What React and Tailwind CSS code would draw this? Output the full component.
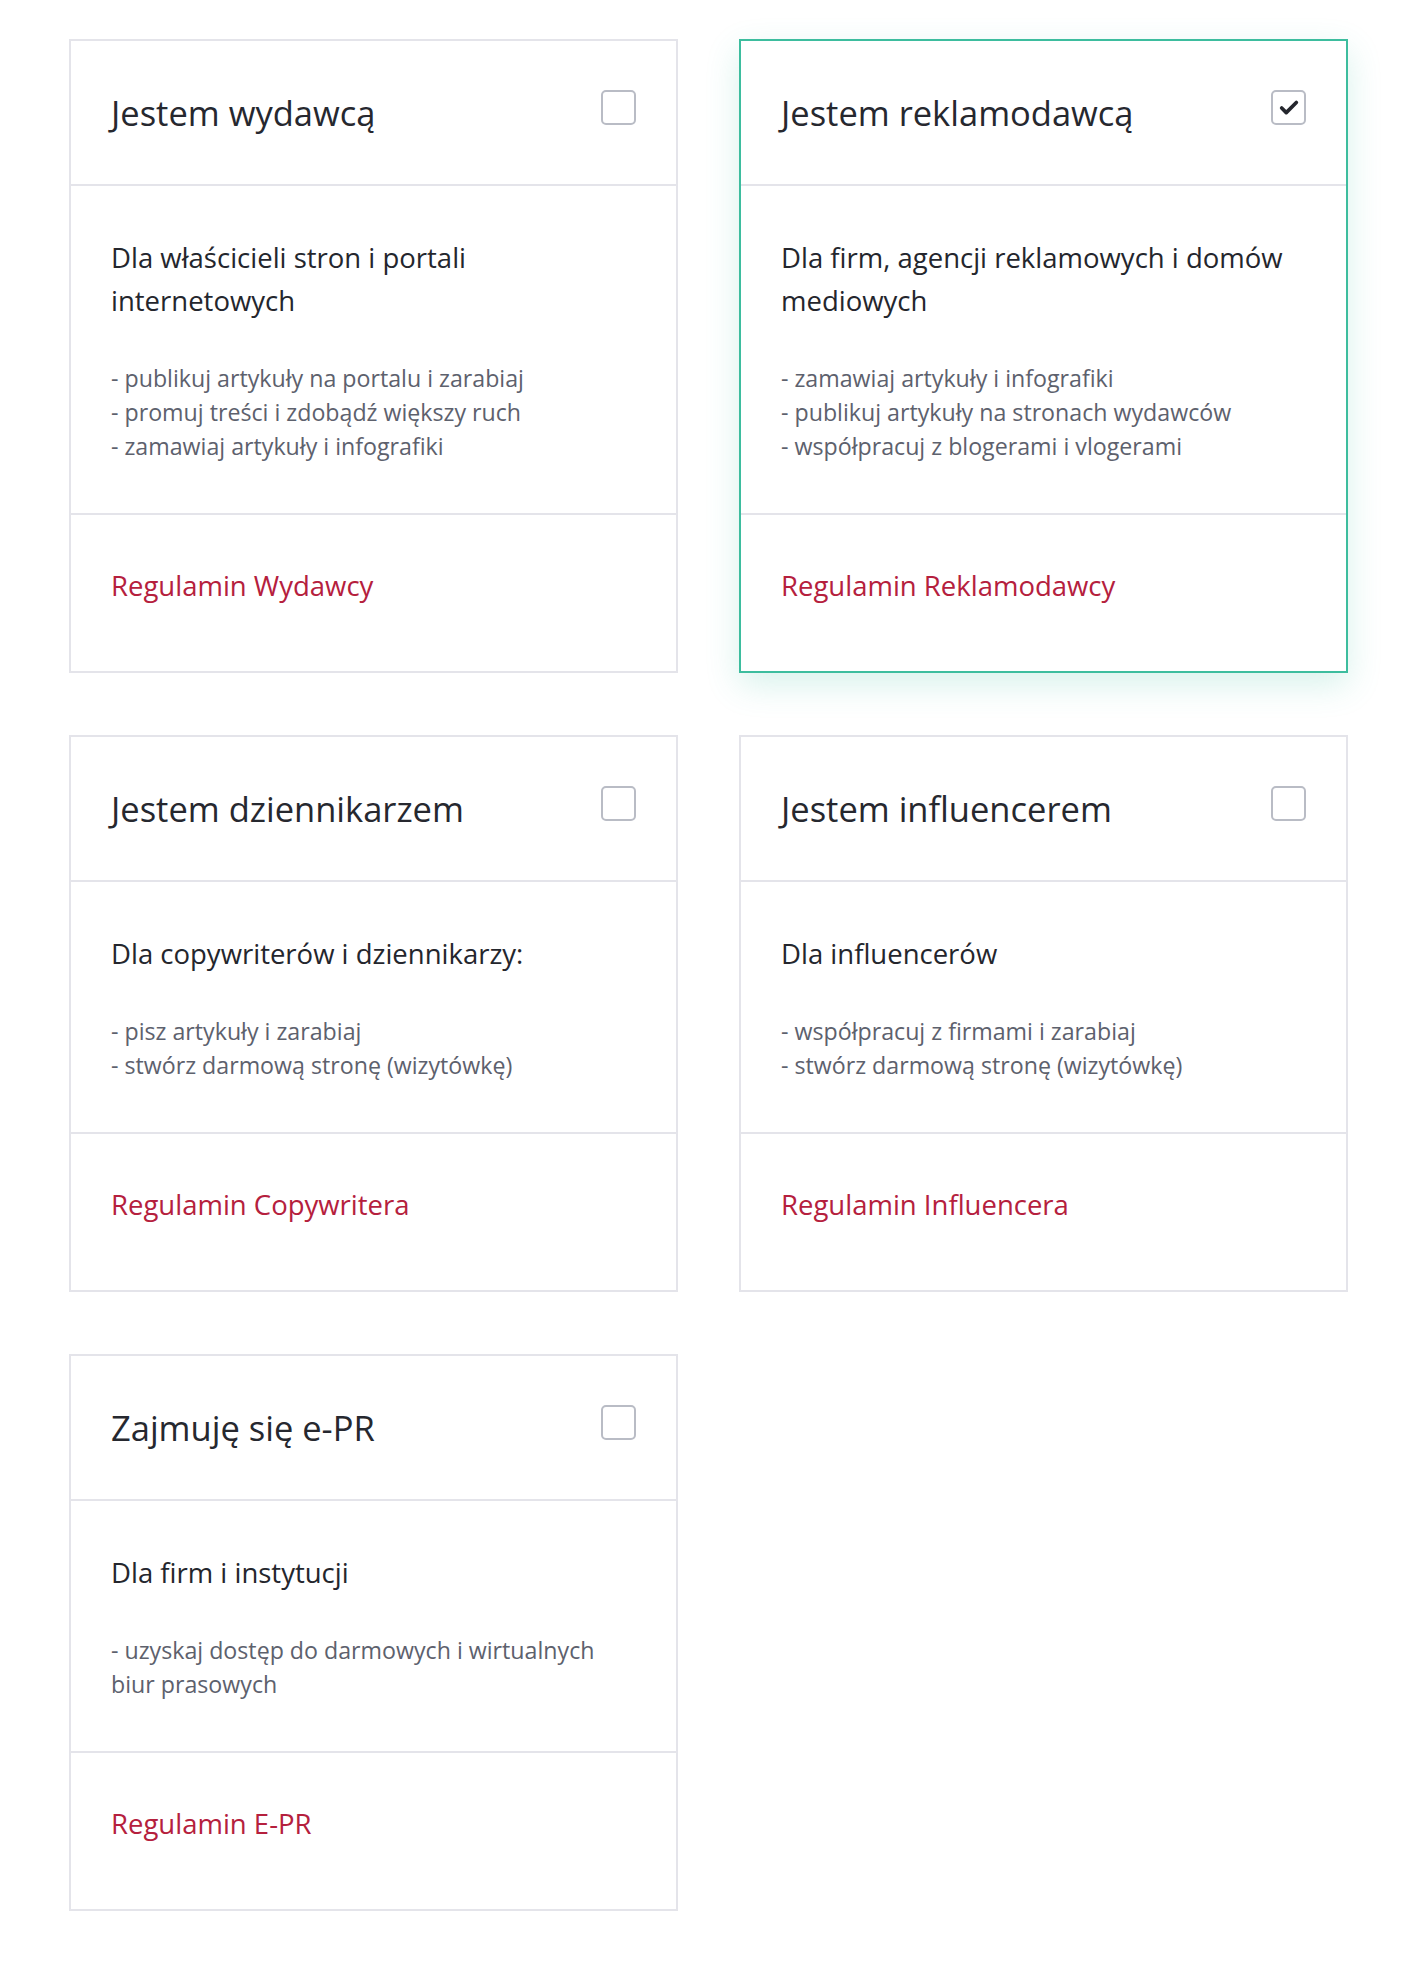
import { Check } from "lucide-react";

const roles = [
  {
    title: "Jestem wydawcą",
    lead: "Dla właścicieli stron i portali internetowych",
    points: [
      "- publikuj artykuły na portalu i zarabiaj",
      "- promuj treści i zdobądź większy ruch",
      "- zamawiaj artykuły i infografiki",
    ],
    terms: "Regulamin Wydawcy",
    checked: false,
  },
  {
    title: "Jestem reklamodawcą",
    lead: "Dla firm, agencji reklamowych i domów mediowych",
    points: [
      "- zamawiaj artykuły i infografiki",
      "- publikuj artykuły na stronach wydawców",
      "- współpracuj z blogerami i vlogerami",
    ],
    terms: "Regulamin Reklamodawcy",
    checked: true,
  },
  {
    title: "Jestem dziennikarzem",
    lead: "Dla copywriterów i dziennikarzy:",
    points: ["- pisz artykuły i zarabiaj", "- stwórz darmową stronę (wizytówkę)"],
    terms: "Regulamin Copywritera",
    checked: false,
  },
  {
    title: "Jestem influencerem",
    lead: "Dla influencerów",
    points: ["- współpracuj z firmami i zarabiaj", "- stwórz darmową stronę (wizytówkę)"],
    terms: "Regulamin Influencera",
    checked: false,
  },
  {
    title: "Zajmuję się e-PR",
    lead: "Dla firm i instytucji",
    points: ["- uzyskaj dostęp do darmowych i wirtualnych biur prasowych"],
    terms: "Regulamin E-PR",
    checked: false,
  },
];

const RoleCard = ({ role }) => (
  <div
    className={`flex flex-col bg-white border-2 ${
      role.checked
        ? "border-[#3dbd9e] shadow-[0_12px_32px_rgba(61,189,158,0.2)]"
        : "border-[#e4e4ea]"
    }`}
  >
    {/* header */}
    <div className="flex items-start justify-between px-[40px] pt-[51px] pb-[50px]">
      <h2 className="text-[34.5px] leading-[42px] font-normal text-[#26282f]">{role.title}</h2>
      <div className="mt-[-2px] flex h-[35px] w-[35px] items-center justify-center rounded-[5px] border-2 border-[#b9bcc5] bg-white">
        {role.checked && <Check className="h-[22px] w-[22px] text-[#24262d]" strokeWidth={4} />}
      </div>
    </div>

    {/* body */}
    <div className="flex-1 border-t-2 border-[#e4e4ea] px-[40px] py-[50px]">
      <p className="text-[27.5px] leading-[43px] text-[#24262d]">{role.lead}</p>
      <div className="mt-[39px] text-[23.2px] leading-[34px] text-[#5d616d]">
        {role.points.map((point, i) => (
          <div key={i}>{point}</div>
        ))}
      </div>
    </div>

    {/* footer */}
    <div className="border-t-2 border-[#e4e4ea] px-[40px] pt-[49px] pb-[64px]">
      <a href="#" className="text-[27.5px] leading-[43px] text-[#b5203d]">
        {role.terms}
      </a>
    </div>
  </div>
);

export default function App() {
  return (
    <div
      className="min-h-screen bg-white pt-[39px] pb-[60px] pl-[69px]"
      style={{ fontFamily: '"Open Sans", "Noto Sans", sans-serif' }}
    >
      <div className="grid grid-cols-[609px_609px] gap-x-[61px] gap-y-[62px]">
        {roles.map((role) => (
          <RoleCard key={role.title} role={role} />
        ))}
      </div>
    </div>
  );
}
